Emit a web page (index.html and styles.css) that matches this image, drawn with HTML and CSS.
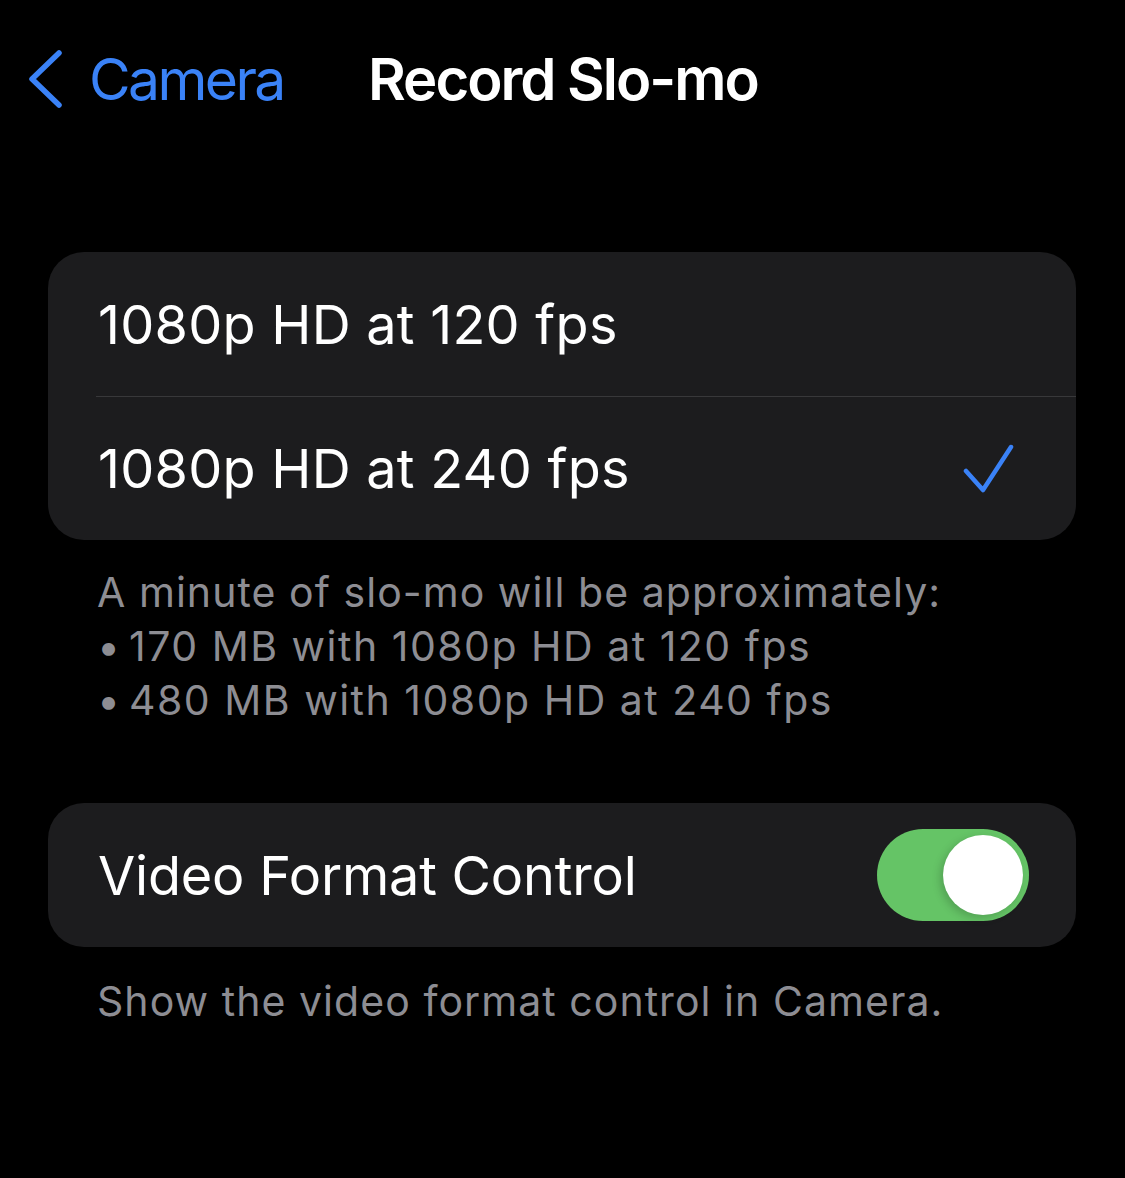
FILE: index.html
```html
<!DOCTYPE html>
<html>
<head>
<meta charset="utf-8">
<link rel="stylesheet" href="styles.css">
</head>
<body>
<div class="screen">
  <header class="nav">
    <div class="back">
      <svg class="chev" width="36" height="60" viewBox="0 0 36 60"><path d="M32 4 L5 30 L32 56" fill="none" stroke="#3a82f7" stroke-width="5.5" stroke-linecap="round" stroke-linejoin="round"/></svg>
      <span class="back-label">Camera</span>
    </div>
    <h1 class="title">Record Slo-mo</h1>
  </header>

  <section class="group first">
    <div class="card">
      <div class="row"><span class="label">1080p HD at 120 fps</span></div>
      <div class="row divided"><span class="label">1080p HD at 240 fps</span>
        <svg class="check" width="52" height="50" viewBox="0 0 52 50"><path d="M3 27 L20 46 L48 3" fill="none" stroke="#3a82f7" stroke-width="4.5" stroke-linecap="round" stroke-linejoin="round"/></svg>
      </div>
    </div>
    <div class="footer">A minute of slo-mo will be approximately:<br><span class="bullet">•</span><span class="item">170 MB with 1080p HD at 120 fps</span><br><span class="bullet">•</span><span class="item">480 MB with 1080p HD at 240 fps</span></div>
  </section>

  <section class="group second">
    <div class="card">
      <div class="row"><span class="label">Video Format Control</span>
        <div class="toggle"><div class="knob"></div></div>
      </div>
    </div>
    <div class="footer">Show the video format control in Camera.</div>
  </section>
</div>
</body>
</html>
```

FILE: styles.css
```css
html, body {
  margin: 0;
  padding: 0;
  background: #000;
}
body {
  font-family: Inter, "Noto Sans", sans-serif;
  color: #fff;
  width: 1125px;
  height: 1178px;
  overflow: hidden;
}
.screen {
  display: flex;
  flex-direction: column;
}
.nav {
  display: flex;
  align-items: center;
  height: 158px;
  padding-left: 27px;
  padding-bottom: 4px;
}
.back {
  display: flex;
  align-items: center;
  gap: 26px;
  width: 341px;
}
.back-label {
  color: #3a82f7;
  font-size: 57px;
  letter-spacing: -2.6px;
}
.title {
  margin: 0;
  font-size: 58px;
  font-weight: 600;
  letter-spacing: -2px;
}
.group {
  padding: 0 49px 0 48px;
}
.group.first {
  margin-top: 90px;
}
.group.second {
  margin-top: 76px;
}
.card {
  background: #1c1c1e;
  border-radius: 36px;
  overflow: hidden;
}
.row {
  height: 144px;
  display: flex;
  align-items: center;
  justify-content: space-between;
  padding-left: 50px;
  padding-right: 48px;
  box-sizing: border-box;
}
.row.divided {
  border-top: 1px solid #38383a;
  margin-left: 48px;
  padding-left: 2px;
  height: 144px;
}
.label {
  font-size: 54px;
  letter-spacing: 0.25px;
}
.second .label {
  letter-spacing: -0.2px;
}
.check {
  margin-right: 13px;
}
.footer {
  color: #8d8d93;
  font-size: 41px;
  line-height: 54px;
  padding: 25px 0 0 49px;
  letter-spacing: 1.05px;
}
.bullet {
  display: inline-block;
  width: 32px;
  box-sizing: border-box;
}
.item {
  letter-spacing: 1.5px;
}
.second .footer {
  padding-top: 27px;
}
.toggle {
  width: 152px;
  height: 92px;
  border-radius: 46px;
  background: #65c466;
  position: relative;
  margin-right: -1px;
}
.knob {
  position: absolute;
  top: 6px;
  right: 6px;
  width: 80px;
  height: 80px;
  border-radius: 50%;
  background: #fff;
  box-shadow: -3px 3px 8px rgba(0,0,0,0.18);
}
```
